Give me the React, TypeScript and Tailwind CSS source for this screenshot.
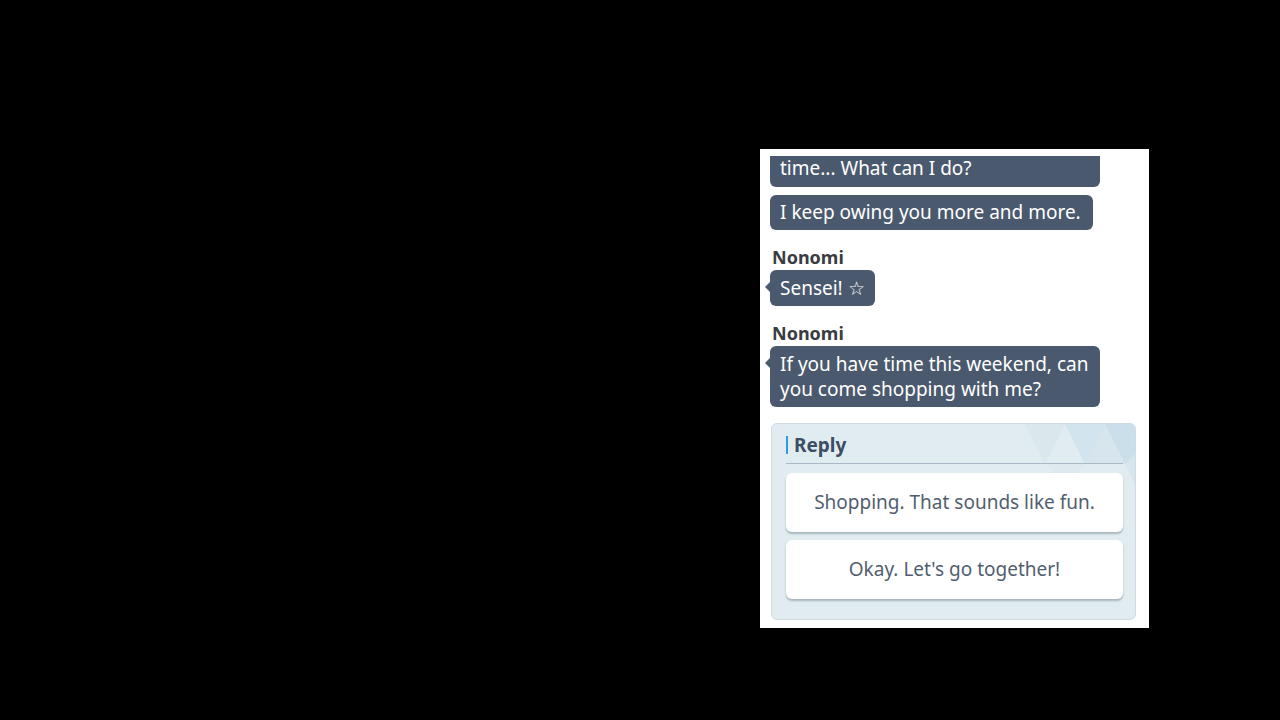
import React from "react";

type Msg = { from?: string; text: string; clipped?: boolean };

const messages: Msg[] = [
  { text: "time... What can I do?", clipped: true },
  { text: "I keep owing you more and more." },
  { from: "Nonomi", text: "Sensei! ☆" },
  { from: "Nonomi", text: "If you have time this weekend, can you come shopping with me?" },
];

const replies = ["Shopping. That sounds like fun.", "Okay. Let's go together!"];

function Bubble({ text, tail, clipped }: { text: string; tail?: boolean; clipped?: boolean }) {
  return (
    <div
      className={`relative bg-[#4b596e] px-[10px] text-[19px] leading-[25px] text-white ${
        clipped
          ? "w-[330px] rounded-b-[6px] pb-[6px] pt-0"
          : tail
          ? "max-w-[330px] self-start rounded-[6px] pb-[5px] pt-[6px]"
          : "max-w-[330px] self-start rounded-[6px] py-[5px] pr-[12px]"
      }`}
    >
      {tail && (
        <span className="absolute left-[-5px] top-[12px] h-0 w-0 border-y-[5px] border-r-[5px] border-y-transparent border-r-[#4b596e]" />
      )}
      {text}
    </div>
  );
}

function TriangleBg() {
  return (
    <svg className="absolute right-0 top-0" width="130" height="60" viewBox="0 0 130 60">
      <polygon points="20,0 60,0 40,40" fill="#d3e4ec" opacity="0.5" />
      <polygon points="60,0 100,0 80,40" fill="#c4dce9" opacity="0.5" />
      <polygon points="80,40 100,0 120,40" fill="#cde0ea" opacity="0.5" />
      <polygon points="100,0 130,0 130,30 120,40" fill="#bdd7e7" opacity="0.6" />
      <polygon points="40,40 80,40 60,60" fill="#d8e7ee" opacity="0.4" />
      <polygon points="120,40 130,30 130,60" fill="#cee0ea" opacity="0.5" />
    </svg>
  );
}

export default function App() {
  return (
    <div
      className="h-[720px] w-full bg-black pl-[760px] pt-[149px]"
      style={{ fontFamily: '"Noto Sans", "Open Sans", sans-serif' }}
    >
      <div className="flex h-[479px] w-[389px] flex-col bg-white pt-[7px]">
        <div className="flex flex-col gap-[8px] pl-[10px]">
          {messages.map((m, i) => (
            <div key={i} className={`flex flex-col ${m.from ? "mt-[8px]" : ""}`}>
              {m.from && (
                <div className="mb-[2px] pl-[2px] text-[18px] font-bold leading-[22px] text-[#3a3c42]">{m.from}</div>
              )}
              <Bubble text={m.text} tail={!!m.from} clipped={m.clipped} />
            </div>
          ))}
        </div>
        <div className="relative ml-[11px] mt-[16px] h-[197px] w-[365px] overflow-hidden rounded-[6px] border border-[#cddce3] bg-[#e1ecf0] pl-[14px] pr-[12px] pt-[9px]">
          <TriangleBg />
          <div className="relative flex items-center gap-[6px] border-b border-[#a9bac6] pb-[6px]">
            <span className="h-[18px] w-[2px] bg-[#2f9ae6]" />
            <span className="text-[19px] font-bold leading-[24px] text-[#3d4d63]">Reply</span>
          </div>
          <div className="relative mt-[9px] flex flex-col gap-[8px]">
            {replies.map((r) => (
              <div
                key={r}
                className="flex h-[59px] items-center justify-center rounded-[6px] bg-white text-[19px] text-[#515e70] shadow-[0_2px_2px_rgba(60,80,100,0.35)]"
              >
                {r}
              </div>
            ))}
          </div>
        </div>
      </div>
    </div>
  );
}
